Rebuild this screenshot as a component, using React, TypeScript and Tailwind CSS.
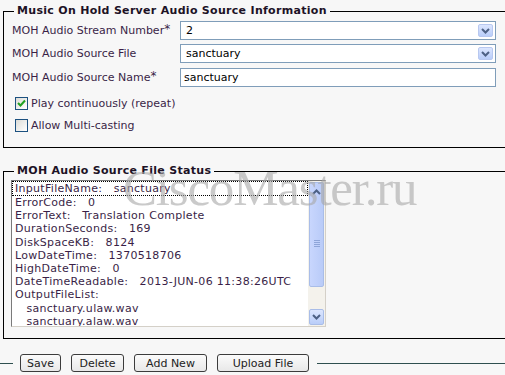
import React from "react";

const font = { fontFamily: '"DejaVu Sans", Verdana, sans-serif' };

function DropButton() {
  return (
    <div className="absolute right-[2px] top-[2px] bottom-[2px] w-[15px] rounded-[2px] border border-[#b8c8f0] bg-gradient-to-b from-[#dce6fe] to-[#b9cdf9] flex items-center justify-center">
      <svg width="9" height="6" viewBox="0 0 9 6">
        <path d="M1 1 L4.5 4.5 L8 1" stroke="#4d6185" strokeWidth="2" fill="none" />
      </svg>
    </div>
  );
}

function Select({ value }: { value: string }) {
  return (
    <div className="relative w-[316px] h-[19px] border border-[#7f9db9] bg-white flex items-center pl-[5px] text-[11px] text-black">
      {value}
      <DropButton />
    </div>
  );
}

function Checkbox({ checked, label }: { checked: boolean; label: string }) {
  return (
    <div className="flex items-center h-[13px]">
      <div className="w-[13px] h-[13px] border border-[#1c5180] bg-gradient-to-br from-[#dcdcd7] to-white flex items-center justify-center">
        {checked && (
          <svg width="9" height="9" viewBox="0 0 9 9">
            <path d="M1 4 L3.5 6.5 L8 1.5" stroke="#21a121" strokeWidth="2" fill="none" />
          </svg>
        )}
      </div>
      <span className="ml-[3px] text-[11px] text-[#3a1f47]">{label}</span>
    </div>
  );
}

const lines = [
  "InputFileName:   sanctuary",
  "ErrorCode:   0",
  "ErrorText:   Translation Complete",
  "DurationSeconds:   169",
  "DiskSpaceKB:   8124",
  "LowDateTime:   1370518706",
  "HighDateTime:   0",
  "DateTimeReadable:   2013-JUN-06 11:38:26UTC",
  "OutputFileList:",
  "   sanctuary.ulaw.wav",
  "   sanctuary.alaw.wav",
];

function Btn({ children, w }: { children: React.ReactNode; w: string }) {
  return (
    <div
      className={`${w} h-[18px] rounded-[3px] border border-[#3c3c3c] bg-gradient-to-b from-[#fbfbfb] to-[#e8e8e8] flex items-center justify-center text-[11px] text-[#222]`}
    >
      {children}
    </div>
  );
}

export default function App() {
  return (
    <div className="relative w-[505px] h-[375px] overflow-hidden bg-[#f7f7f7] leading-[13px]" style={font}>
      <fieldset className="ml-[3px] mt-[4px] w-[540px] border border-black p-0">
        <legend className="ml-[10px] px-[3px] text-[11px] leading-[14px] font-bold tracking-[0.3px] text-[#1d1226]">
          Music On Hold Server Audio Source Information
        </legend>
        <div className="pl-[8px] pt-[3px] pb-[15px]">
          <div className="flex items-center">
            <div className="w-[168px] text-[11px] text-[#3a1f47]">
              MOH Audio Stream Number<sup className="text-[12px] relative top-[-1px]">*</sup>
            </div>
            <Select value="2" />
          </div>
          <div className="flex items-center mt-[4px]">
            <div className="w-[168px] text-[11px] text-[#3a1f47]">MOH Audio Source File</div>
            <Select value="sanctuary" />
          </div>
          <div className="flex items-center mt-[5px]">
            <div className="w-[168px] text-[11px] text-[#3a1f47]">
              MOH Audio Source Name<sup className="text-[12px] relative top-[-1px]">*</sup>
            </div>
            <div className="w-[316px] h-[19px] border border-[#7f9db9] bg-white flex items-center pl-[3px] text-[11px] text-black">
              sanctuary
            </div>
          </div>
          <div className="ml-[3px] mt-[10px]">
            <Checkbox checked label="Play continuously (repeat)" />
          </div>
          <div className="ml-[3px] mt-[9px]">
            <Checkbox checked={false} label="Allow Multi-casting" />
          </div>
        </div>
      </fieldset>

      <fieldset className="ml-[3px] mt-[16px] w-[540px] border border-black p-0">
        <legend className="ml-[10px] px-[3px] text-[11px] leading-[14px] font-bold tracking-[0.3px] text-[#1d1226]">
          MOH Audio Source File Status
        </legend>
        <div className="pl-[7px] pt-[2px] pb-[11px]">
          <div className="relative w-[315px] h-[147px] border-t border-l border-[#7a7a7a] border-r-[#d4d0c8] border-b-[#d4d0c8] border-r border-b bg-white overflow-hidden">
            <div className="pl-[3px] text-[11px] leading-[13.2px] tracking-[0.3px] text-[#3a1f47] whitespace-pre">
              {lines.map((l, i) => (
                <div
                  key={i}
                  className={
                    i === 0
                      ? "h-[15px] w-[296px] -ml-[3px] pl-[2px] border border-dotted border-black flex items-center"
                      : ""
                  }
                >
                  {l}
                </div>
              ))}
            </div>
            <div className="absolute right-0 top-0 bottom-0 w-[17px] bg-[#f4f2ec] flex flex-col p-[1px]">
              <div className="h-[105px] rounded-[2px] border border-[#a9bde8] bg-gradient-to-r from-[#c8d6fd] to-[#b9cbf8] flex flex-col items-center">
                <svg width="9" height="6" viewBox="0 0 9 6" className="mt-[6px]">
                  <path d="M1 5 L4.5 1.5 L8 5" stroke="#4d6185" strokeWidth="2" fill="none" />
                </svg>
                <div className="mt-[45px] flex flex-col gap-[1px]">
                  <div className="w-[6px] h-px bg-[#8ea5d8]" />
                  <div className="w-[6px] h-px bg-[#8ea5d8]" />
                  <div className="w-[6px] h-px bg-[#8ea5d8]" />
                  <div className="w-[6px] h-px bg-[#8ea5d8]" />
                </div>
              </div>
              <div className="flex-1" />
              <div className="h-[16px] rounded-[2px] border border-[#a9bde8] bg-gradient-to-b from-[#dce6fe] to-[#b9cdf9] flex items-center justify-center">
                <svg width="9" height="6" viewBox="0 0 9 6">
                  <path d="M1 1 L4.5 4.5 L8 1" stroke="#4d6185" strokeWidth="2" fill="none" />
                </svg>
              </div>
            </div>
          </div>
        </div>
      </fieldset>

      <div className="flex items-center mt-[15px]">
        <div className="w-[13px] h-px bg-[#2f4f4f]" />
        <div className="ml-[7px] flex gap-[10px]">
          <Btn w="w-[41px]">Save</Btn>
          <Btn w="w-[53px]">Delete</Btn>
          <Btn w="w-[73px]">Add New</Btn>
          <Btn w="w-[92px]">Upload File</Btn>
        </div>
        <div className="ml-[8px] flex-1 h-px bg-[#2f4f4f]" />
      </div>

      <div
        className="absolute left-[123px] top-[163px] text-[51px] leading-none tracking-[-1.2px] text-[#a8a8a8] opacity-60 pointer-events-none"
        style={{ fontFamily: '"Liberation Serif", "Times New Roman", serif' }}
      >
        CiscoMaster.ru
      </div>
    </div>
  );
}
